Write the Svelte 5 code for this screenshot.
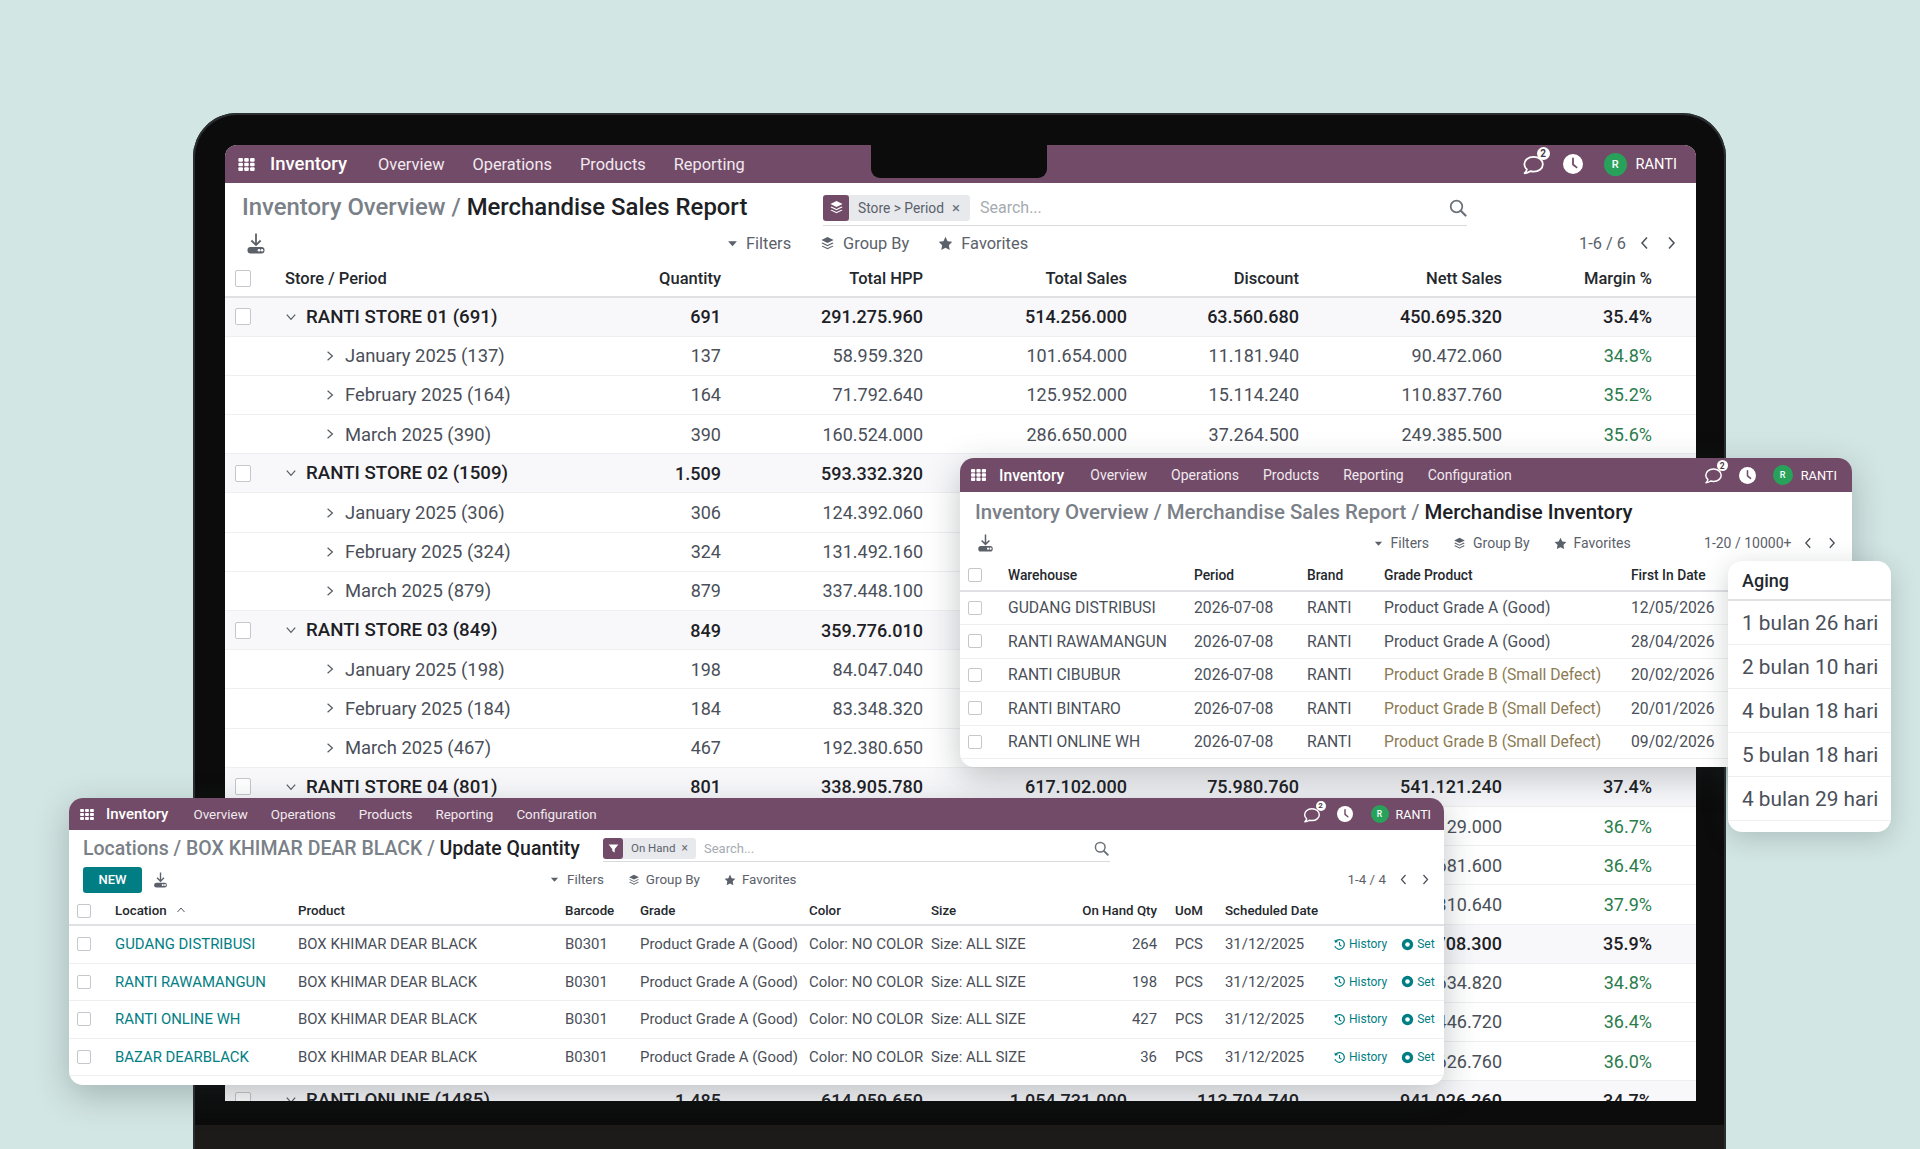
<script>
  const stores = [
    { name: 'RANTI STORE 01 (691)', v: ['691', '291.275.960', '514.256.000', '63.560.680', '450.695.320', '35.4%'], months: [
      ['January 2025 (137)', '137', '58.959.320', '101.654.000', '11.181.940', '90.472.060', '34.8%'],
      ['February 2025 (164)', '164', '71.792.640', '125.952.000', '15.114.240', '110.837.760', '35.2%'],
      ['March 2025 (390)', '390', '160.524.000', '286.650.000', '37.264.500', '249.385.500', '35.6%']
    ] },
    { name: 'RANTI STORE 02 (1509)', v: ['1.509', '593.332.320', '1.052.310.000', '126.277.200', '926.032.800', '35.9%'], months: [
      ['January 2025 (306)', '306', '124.392.060', '221.540.000', '26.584.800', '194.955.200', '36.2%'],
      ['February 2025 (324)', '324', '131.492.160', '235.420.000', '28.250.400', '207.169.600', '36.5%'],
      ['March 2025 (879)', '879', '337.448.100', '595.350.000', '71.442.000', '523.908.000', '35.6%']
    ] },
    { name: 'RANTI STORE 03 (849)', v: ['849', '359.776.010', '640.920.000', '76.910.400', '564.009.600', '36.2%'], months: [
      ['January 2025 (198)', '198', '84.047.040', '149.460.000', '17.935.200', '131.524.800', '36.1%'],
      ['February 2025 (184)', '184', '83.348.320', '145.820.000', '17.498.400', '128.321.600', '35.0%'],
      ['March 2025 (467)', '467', '192.380.650', '345.640.000', '41.476.800', '304.163.200', '36.7%']
    ] },
    { name: 'RANTI STORE 04 (801)', v: ['801', '338.905.780', '617.102.000', '75.980.760', '541.121.240', '37.4%'], months: [
      ['January 2025 (201)', '201', '90.640.120', '162.650.000', '19.521.000', '143.129.000', '36.7%'],
      ['February 2025 (210)', '210', '100.263.900', '179.180.000', '21.498.400', '157.681.600', '36.4%'],
      ['March 2025 (390)', '390', '149.257.400', '272.900.000', '32.589.360', '240.310.640', '37.9%']
    ] },
    { name: 'RANTI STORE 05 (1198)', v: ['1.198', '350.480.500', '621.240.000', '74.531.700', '546.708.300', '35.9%'], months: [
      ['January 2025 (310)', '310', '87.781.300', '153.000.000', '18.365.180', '134.634.820', '34.8%'],
      ['February 2025 (360)', '360', '93.760.500', '167.550.000', '20.103.280', '147.446.720', '36.4%'],
      ['March 2025 (528)', '528', '169.360.760', '300.710.000', '36.083.240', '264.626.760', '36.0%']
    ] },
    { name: 'RANTI ONLINE (1485)', v: ['1.485', '614.059.650', '1.054.731.000', '113.704.740', '941.026.260', '34.7%'], months: [] }
  ];

  const inventory = [
    ['GUDANG DISTRIBUSI', 'Product Grade A (Good)', '12/05/2026', false],
    ['RANTI RAWAMANGUN', 'Product Grade A (Good)', '28/04/2026', false],
    ['RANTI CIBUBUR', 'Product Grade B (Small Defect)', '20/02/2026', true],
    ['RANTI BINTARO', 'Product Grade B (Small Defect)', '20/01/2026', true],
    ['RANTI ONLINE WH', 'Product Grade B (Small Defect)', '09/02/2026', true]
  ];
  const aging = ['1 bulan 26 hari', '2 bulan 10 hari', '4 bulan 18 hari', '5 bulan 18 hari', '4 bulan 29 hari'];
  const quants = [
    ['GUDANG DISTRIBUSI', '264'],
    ['RANTI RAWAMANGUN', '198'],
    ['RANTI ONLINE WH', '427'],
    ['BAZAR DEARBLACK', '36']
  ];
  const baseMenu = ['Overview', 'Operations', 'Products', 'Reporting'];
  const fullMenu = [...baseMenu, 'Configuration'];
</script>

{#snippet apps()}
  <svg class="apps" viewBox="0 0 15 12" aria-hidden="true">
    {#each [0, 1, 2] as r}
      {#each [0, 1, 2] as c}
        <rect x={c * 5.4} y={r * 4.3} width="4.2" height="3.4" rx="0.9" fill="#fff" />
      {/each}
    {/each}
  </svg>
{/snippet}

{#snippet nav(menu)}
  <header class="nav">
    {@render apps()}
    <span class="brand">Inventory</span>
    <nav class="menu">
      {#each menu as item}<span>{item}</span>{/each}
    </nav>
    <div class="systray">
      <span class="chat">
        <svg viewBox="0 0 20 20" aria-hidden="true">
          <path d="M10.5 4C6 4 2.8 6.8 2.8 10.2c0 1.7.8 3.2 2.1 4.3-.2 1.2-.9 2.3-1.9 3.2 1.9-.1 3.5-.8 4.7-1.7.9.3 1.8.4 2.8.4 4.5 0 7.7-2.8 7.7-6.2S15 4 10.5 4z" fill="none" stroke="#fff" stroke-width="1.5" stroke-linejoin="round" />
        </svg>
        <i class="badge">2</i>
      </span>
      <svg class="clock" viewBox="0 0 20 20" aria-hidden="true">
        <circle cx="10" cy="10" r="10" fill="#fff" />
        <path d="M10 4.5V10.5L13.6 13.4" fill="none" stroke="#714b67" stroke-width="1.8" stroke-linecap="round" />
      </svg>
      <span class="avatar">R</span>
      <span class="user">RANTI</span>
    </div>
  </header>
{/snippet}

{#snippet caret()}
  <svg class="ic caret" viewBox="0 0 10 10" aria-hidden="true"><path d="M1 3h8L5 7.6z" fill="currentColor" /></svg>
{/snippet}

{#snippet layers()}
  <svg class="ic" viewBox="0 0 16 16" aria-hidden="true">
    <path d="M8 1l6.5 3.2L8 7.4 1.5 4.2z" fill="currentColor" />
    <path d="M2.8 6.9L8 9.5l5.2-2.6 1.3.7L8 10.8 1.5 7.6z" fill="currentColor" />
    <path d="M2.8 10.3L8 12.9l5.2-2.6 1.3.7L8 14.2 1.5 11z" fill="currentColor" />
  </svg>
{/snippet}

{#snippet star()}
  <svg class="ic" viewBox="0 0 16 16" aria-hidden="true">
    <path d="M8 .8l2.2 4.7 5 .7-3.6 3.6.9 5.1L8 12.5l-4.5 2.4.9-5.1L.8 6.2l5-.7z" fill="currentColor" />
  </svg>
{/snippet}

{#snippet download()}
  <svg class="download" viewBox="0 0 20 22" aria-hidden="true">
    <path d="M10 1v11M5.4 8l4.6 4.6L14.6 8" fill="none" stroke="currentColor" stroke-width="1.8" />
    <rect x="1.5" y="14.5" width="17" height="6.5" rx="3" fill="currentColor" />
    <circle cx="13" cy="17.7" r="1.3" fill="#fff" />
    <circle cx="16" cy="17.7" r="1.3" fill="#fff" />
  </svg>
{/snippet}

{#snippet pager(label)}
  <div class="pager">
    <span>{label}</span>
    <svg class="chev" viewBox="0 0 10 16" aria-hidden="true"><path d="M7.5 2.5L2.5 8l5 5.5" /></svg>
    <svg class="chev" viewBox="0 0 10 16" aria-hidden="true"><path d="M2.5 2.5l5 5.5-5 5.5" /></svg>
  </div>
{/snippet}

{#snippet facets()}
  <div class="facets">
    <span class="facet">{@render caret()}Filters</span>
    <span class="facet">{@render layers()}Group By</span>
    <span class="facet">{@render star()}Favorites</span>
  </div>
{/snippet}

{#snippet search(label, icon)}
  <div class="search">
    <span class="chip">
      <span class="chip-icon">
        {#if icon === 'filter'}
          <svg viewBox="0 0 16 16" aria-hidden="true"><path d="M2 3h12L9.5 8.5V13L6.5 11V8.5z" fill="#fff" /></svg>
        {:else}
          <svg viewBox="0 0 16 16" aria-hidden="true">
            <path d="M8 1l6.5 3.2L8 7.4 1.5 4.2z" fill="#fff" />
            <path d="M2.8 6.9L8 9.5l5.2-2.6 1.3.7L8 10.8 1.5 7.6zM2.8 10.3L8 12.9l5.2-2.6 1.3.7L8 14.2 1.5 11z" fill="#fff" />
          </svg>
        {/if}
      </span>
      <span class="chip-label">{label}</span>
      <span class="chip-x">×</span>
    </span>
    <span class="placeholder">Search...</span>
    <svg class="magnifier" viewBox="0 0 18 18" aria-hidden="true">
      <circle cx="7.5" cy="7.5" r="5.8" fill="none" stroke="currentColor" stroke-width="1.8" />
      <path d="M11.8 11.8L16.5 16.5" stroke="currentColor" stroke-width="2.2" stroke-linecap="round" />
    </svg>
  </div>
{/snippet}

{#snippet checkbox()}<span class="check"></span>{/snippet}

<div class="stage">
  <div class="laptop">
    <div class="screen main">
      {@render nav(baseMenu)}
      <div class="title-row">
        <h1><span class="crumb">Inventory Overview /</span> Merchandise Sales Report</h1>
        {@render search('Store > Period', 'layers')}
      </div>
      <div class="tools">
        {@render download()}
        {@render facets()}
        {@render pager('1-6 / 6')}
      </div>
      <div class="row head">
        <span class="cb">{@render checkbox()}</span>
        <span>Store / Period</span>
        <span class="num">Quantity</span>
        <span class="num">Total HPP</span>
        <span class="num">Total Sales</span>
        <span class="num">Discount</span>
        <span class="num">Nett Sales</span>
        <span class="num">Margin %</span>
      </div>
      {#each stores as store}
        <div class="row group">
          <span class="cb">{@render checkbox()}</span>
          <span class="label">
            <svg class="fold" viewBox="0 0 10 10" aria-hidden="true"><path d="M1.5 3l3.5 4 3.5-4" /></svg>
            {store.name}
          </span>
          {#each store.v as val}<span class="num">{val}</span>{/each}
        </div>
        {#each store.months as m}
          <div class="row month">
            <span class="cb"></span>
            <span class="label">
              <svg class="fold" viewBox="0 0 10 10" aria-hidden="true"><path d="M3 1.5l4 3.5-4 3.5" /></svg>
              {m[0]}
            </span>
            {#each m.slice(1) as val, i}
              <span class="num" class:good={i === 5}>{val}</span>
            {/each}
          </div>
        {/each}
      {/each}
      <div class="notch"></div>
    </div>
    <div class="chin"></div>
  </div>

  <section class="window inv">
    {@render nav(fullMenu)}
    <div class="title-row">
      <h1><span class="crumb">Inventory Overview / Merchandise Sales Report /</span> Merchandise Inventory</h1>
    </div>
    <div class="tools">
      {@render download()}
      {@render facets()}
      {@render pager('1-20 / 10000+')}
    </div>
    <div class="row head">
      <span class="cb">{@render checkbox()}</span>
      <span>Warehouse</span><span>Period</span><span>Brand</span><span>Grade Product</span><span>First In Date</span>
    </div>
    {#each inventory as [wh, grade, date, defect]}
      <div class="row">
        <span class="cb">{@render checkbox()}</span>
        <span>{wh}</span><span>2026-07-08</span><span>RANTI</span>
        <span class:defect>{grade}</span><span>{date}</span>
      </div>
    {/each}
  </section>

  <aside class="aging">
    <div class="aging-head">Aging</div>
    {#each aging as a}<div class="aging-row">{a}</div>{/each}
  </aside>

  <section class="window quant">
    {@render nav(fullMenu)}
    <div class="title-row">
      <h1><span class="crumb">Locations / BOX KHIMAR DEAR BLACK /</span> Update Quantity</h1>
      {@render search('On Hand', 'filter')}
    </div>
    <div class="tools">
      <button class="new">NEW</button>
      {@render download()}
      {@render facets()}
      {@render pager('1-4 / 4')}
    </div>
    <div class="row head">
      <span class="cb">{@render checkbox()}</span>
      <span>Location <svg class="sort" viewBox="0 0 10 10" aria-hidden="true"><path d="M1.5 7l3.5-4 3.5 4" /></svg></span>
      <span>Product</span><span>Barcode</span><span>Grade</span><span>Color</span><span>Size</span>
      <span class="num">On Hand Qty</span><span class="uom">UoM</span><span>Scheduled Date</span><span></span>
    </div>
    {#each quants as [loc, qty]}
      <div class="row">
        <span class="cb">{@render checkbox()}</span>
        <span class="link">{loc}</span>
        <span>BOX KHIMAR DEAR BLACK</span><span>B0301</span><span>Product Grade A (Good)</span>
        <span>Color: NO COLOR</span><span>Size: ALL SIZE</span>
        <span class="num">{qty}</span><span class="uom">PCS</span><span>31/12/2025</span>
        <span class="actions">
          <span class="act">
            <svg viewBox="0 0 16 16" aria-hidden="true">
              <path d="M3.2 4.2A6 6 0 1 1 2.3 10" fill="none" stroke="currentColor" stroke-width="1.5" />
              <path d="M1.8 1.8l.6 4 3.9-.9z" fill="currentColor" />
              <path d="M8 4.8V8.5l2.4 1.6" fill="none" stroke="currentColor" stroke-width="1.4" />
            </svg>
            History
          </span>
          <span class="act">
            <svg viewBox="0 0 16 16" aria-hidden="true">
              <circle cx="8" cy="8" r="7" fill="currentColor" />
              <circle cx="8" cy="8" r="2.8" fill="#fff" />
            </svg>
            Set
          </span>
        </span>
      </div>
    {/each}
  </section>
</div>

<style>
  :global(body) {
    background: #d2e6e3;
  }
  .stage {
    position: relative;
    width: 1920px;
    height: 1149px;
    overflow: hidden;
    padding: 113px 0 0 193px;
    box-sizing: border-box;
    background: #d2e6e3;
    font-family: Roboto, 'Liberation Sans', sans-serif;
    color: #4a4f59;
  }

  /* laptop */
  .laptop {
    width: 1533px;
    height: 1036px;
    box-sizing: border-box;
    padding: 32px 30px 0 32px;
    background: #0c0c0c;
    border-radius: 44px 44px 0 0;
    box-shadow: inset 0 0 0 2px #2b2e31;
    position: relative;
  }
  .chin {
    position: absolute;
    left: 2px;
    right: 2px;
    top: 1012px;
    height: 24px;
    background: #1d1a1a;
  }
  .screen {
    position: relative;
    height: 956px;
    overflow: hidden;
    background: #fff;
    border-radius: 12px 12px 0 0;
  }
  .notch {
    position: absolute;
    left: 646px;
    top: 0;
    width: 176px;
    height: 33px;
    background: #0c0c0c;
    border-radius: 0 0 9px 9px;
  }

  /* shared chrome */
  .nav {
    display: flex;
    align-items: center;
    background: #714b67;
    color: #fff;
  }
  .apps {
    flex: none;
  }
  .brand {
    font-weight: 500;
  }
  .menu {
    display: flex;
    color: #f1e9ef;
  }
  .systray {
    margin-left: auto;
    display: flex;
    align-items: center;
  }
  .chat {
    position: relative;
    display: block;
  }
  .chat svg {
    display: block;
    width: 100%;
    height: 100%;
  }
  .badge {
    position: absolute;
    display: flex;
    align-items: center;
    justify-content: center;
    border-radius: 50%;
    background: #fff;
    color: #4a3a47;
    font-style: normal;
    font-weight: 700;
  }
  .avatar {
    display: flex;
    align-items: center;
    justify-content: center;
    border-radius: 50%;
    background: #28a25a;
    color: #fff;
    font-weight: 500;
  }
  h1 {
    margin: 0;
    font-weight: 500;
    color: #1d2125;
    white-space: nowrap;
  }
  .crumb {
    color: #7a8087;
  }
  .title-row {
    display: flex;
    align-items: center;
    box-sizing: border-box;
  }
  .search {
    display: flex;
    align-items: center;
    border-bottom: 1px solid #d8dadd;
    box-sizing: border-box;
  }
  .chip {
    display: flex;
    align-items: center;
    background: #e7e9ed;
    border-radius: 3px;
    color: #5b616a;
  }
  .chip-icon {
    display: flex;
    align-items: center;
    justify-content: center;
    align-self: stretch;
    background: #714b67;
    border-radius: 3px;
  }
  .chip-x {
    color: #6c7279;
  }
  .placeholder {
    color: #a6abb1;
  }
  .magnifier {
    margin-left: auto;
    color: #6c7279;
  }
  .tools {
    display: flex;
    align-items: center;
    box-sizing: border-box;
  }
  .download {
    color: #5c6169;
    flex: none;
  }
  .facets {
    display: flex;
    align-items: center;
    color: #5b616a;
  }
  .facet {
    display: flex;
    align-items: center;
  }
  .ic {
    flex: none;
    color: #5b616a;
  }
  .pager {
    display: flex;
    align-items: center;
    margin-left: auto;
    color: #5b616a;
  }
  .chev {
    fill: none;
    stroke: #4a4f59;
    stroke-width: 1.5;
  }
  .row {
    display: grid;
    align-items: center;
    border-bottom: 1px solid #efeff2;
    white-space: nowrap;
    box-sizing: border-box;
  }
  .row.head {
    color: #24282d;
    font-weight: 500;
    border-bottom: 2px solid #dfe1e4;
  }
  .num {
    text-align: right;
  }
  .cb {
    display: flex;
    justify-content: flex-start;
  }
  .check {
    box-sizing: border-box;
    display: block;
    background: #fff;
    border: 1px solid #c4c7cc;
    border-radius: 2px;
  }
  .window {
    position: absolute;
    background: #fff;
    overflow: hidden;
    box-shadow: 0 10px 34px rgba(40, 50, 55, 0.28);
  }

  /* main report */
  .main .nav {
    height: 38px;
    padding: 0 19px 0 13px;
    font-size: 16.4px;
  }
  .main .apps {
    width: 17px;
    height: 13px;
  }
  .main .brand {
    margin-left: 15px;
    font-size: 18.5px;
  }
  .main .menu {
    margin-left: 31px;
    gap: 28px;
  }
  .main .chat {
    width: 24px;
    height: 24px;
  }
  .main .badge {
    top: -5px;
    right: -5px;
    width: 13px;
    height: 13px;
    font-size: 10px;
  }
  .main .clock {
    width: 20px;
    height: 20px;
    margin-left: 18px;
  }
  .main .avatar {
    width: 23px;
    height: 23px;
    margin-left: 21px;
    font-size: 11px;
  }
  .main .user {
    margin-left: 9px;
    font-size: 14.6px;
  }
  .main .title-row {
    height: 48px;
    padding-left: 17px;
  }
  .main h1 {
    font-size: 23.9px;
    width: 581px;
  }
  .main .search {
    width: 644px;
    height: 36px;
    margin-top: 2px;
  }
  .main .chip {
    height: 26px;
    width: 147px;
    font-size: 13.8px;
  }
  .main .chip-icon {
    width: 26px;
  }
  .main .chip-icon svg {
    width: 15px;
    height: 15px;
  }
  .main .chip-label {
    margin-left: 9px;
  }
  .main .chip-x {
    margin-left: 8px;
    font-size: 15px;
  }
  .main .placeholder {
    margin-left: 10px;
    font-size: 16px;
  }
  .main .magnifier {
    width: 18px;
    height: 18px;
  }
  .main .tools {
    height: 31px;
    padding: 0 19px 7px 0;
    font-size: 16.4px;
  }
  .main .download {
    width: 20px;
    height: 23px;
    margin-left: 21px;
  }
  .main .facets {
    margin-left: 461px;
    gap: 29px;
  }
  .main .facet {
    gap: 8px;
  }
  .main .ic {
    width: 15px;
    height: 15px;
  }
  .main .caret {
    width: 11px;
    height: 11px;
  }
  .main .pager .chev {
    width: 11px;
    height: 16px;
    margin-left: 16px;
  }
  .main .pager .chev:first-of-type {
    margin-left: 13px;
  }
  .main .row {
    grid-template-columns: 60px 336px 100px 202px 204px 172px 203px 150px;
    height: 39.2px;
    font-size: 18px;
  }
  .main .row.head {
    height: 35.5px;
    font-size: 16.5px;
  }
  .main .cb {
    padding-left: 10px;
  }
  .main .check {
    width: 16px;
    height: 17px;
  }
  .main .group {
    background: #f8f8fb;
    color: #1d2125;
    font-weight: 500;
  }
  .main .label {
    display: flex;
    align-items: center;
    gap: 9px;
    font-size: 18.4px;
  }
  .main .group .label {
    font-size: 18.7px;
  }
  .fold {
    width: 12px;
    height: 12px;
    fill: none;
    stroke: #555b63;
    stroke-width: 1;
    flex: none;
  }
  .main .month .label {
    padding-left: 39px;
  }
  .good {
    color: #2a7c4c;
  }

  /* merchandise inventory */
  .inv {
    left: 960px;
    top: 458px;
    width: 892px;
    height: 309px;
    border-radius: 14px 14px 0 14px;
  }
  .inv .nav {
    height: 34px;
    padding: 0 15px 0 11px;
    font-size: 14px;
  }
  .inv .apps {
    width: 15px;
    height: 12px;
  }
  .inv .brand {
    margin-left: 13px;
    font-size: 15.7px;
  }
  .inv .menu {
    margin-left: 26px;
    gap: 24px;
  }
  .inv .chat {
    width: 20px;
    height: 20px;
  }
  .inv .badge {
    top: -5px;
    right: -5px;
    width: 11px;
    height: 11px;
    font-size: 8.5px;
  }
  .inv .clock {
    width: 17px;
    height: 17px;
    margin-left: 16px;
  }
  .inv .avatar {
    width: 20px;
    height: 20px;
    margin-left: 17px;
    font-size: 9px;
  }
  .inv .user {
    margin-left: 8px;
    font-size: 12.8px;
  }
  .inv .title-row {
    height: 39px;
    padding-left: 15px;
  }
  .inv h1 {
    font-size: 20.4px;
  }
  .inv .tools {
    height: 28.5px;
    padding: 0 15px 4.5px 0;
    font-size: 14px;
  }
  .inv .download {
    width: 17px;
    height: 20px;
    margin-left: 17px;
  }
  .inv .facets {
    margin-left: 379.5px;
    gap: 24px;
  }
  .inv .facet {
    gap: 7px;
  }
  .inv .ic {
    width: 13px;
    height: 13px;
  }
  .inv .caret {
    width: 9px;
    height: 9px;
    margin-right: 1px;
  }
  .inv .pager .chev {
    width: 10px;
    height: 14px;
    margin-left: 14px;
  }
  .inv .pager .chev:first-of-type {
    margin-left: 11.5px;
  }
  .inv .row {
    grid-template-columns: 48px 186px 113px 77px 247px auto;
    height: 33.5px;
    font-size: 15.7px;
  }
  .inv .row.head {
    height: 32px;
    font-size: 13.8px;
  }
  .inv .check {
    width: 14px;
    height: 14px;
  }
  .inv .cb {
    padding-left: 8px;
  }
  .defect {
    color: #8b7a52;
  }

  /* aging */
  .aging {
    position: absolute;
    left: 1728px;
    top: 561px;
    width: 163px;
    height: 271px;
    background: #fff;
    border-radius: 14px;
    box-shadow: 0 6px 26px rgba(40, 50, 55, 0.22);
    overflow: hidden;
  }
  .aging-head {
    height: 40px;
    line-height: 40px;
    padding-left: 14px;
    box-sizing: border-box;
    font-size: 18px;
    font-weight: 500;
    color: #24282d;
    border-bottom: 2px solid #dfe1e4;
  }
  .aging-row {
    height: 44px;
    line-height: 44px;
    padding-left: 14px;
    font-size: 20.8px;
    box-sizing: border-box;
    border-bottom: 1px solid #efeff2;
  }

  /* update quantity */
  .quant {
    left: 69px;
    top: 798px;
    width: 1375px;
    height: 287px;
    border-radius: 14px;
  }
  .quant .nav {
    height: 32px;
    padding: 0 13px 0 11px;
    font-size: 13.4px;
  }
  .quant .apps {
    width: 14px;
    height: 11px;
  }
  .quant .brand {
    margin-left: 12px;
    font-size: 15px;
  }
  .quant .menu {
    margin-left: 25px;
    gap: 23px;
  }
  .quant .chat {
    width: 19px;
    height: 19px;
  }
  .quant .badge {
    top: -4px;
    right: -5px;
    width: 10px;
    height: 10px;
    font-size: 8px;
  }
  .quant .clock {
    width: 16px;
    height: 16px;
    margin-left: 16px;
  }
  .quant .avatar {
    width: 18px;
    height: 18px;
    margin-left: 18px;
    font-size: 8.5px;
  }
  .quant .user {
    margin-left: 7px;
    font-size: 12.5px;
  }
  .quant .title-row {
    height: 35px;
    padding-left: 14px;
    padding-top: 2px;
  }
  .quant h1 {
    font-size: 19.5px;
    width: 520px;
  }
  .quant .search {
    width: 507px;
    height: 26px;
  }
  .quant .chip {
    height: 21px;
    width: 93px;
    font-size: 11.5px;
  }
  .quant .chip-icon {
    width: 20px;
  }
  .quant .chip-icon svg {
    width: 13px;
    height: 13px;
  }
  .quant .chip-label {
    margin-left: 8px;
  }
  .quant .chip-x {
    margin-left: 6px;
    font-size: 12px;
  }
  .quant .placeholder {
    margin-left: 8px;
    font-size: 13px;
  }
  .quant .magnifier {
    width: 15px;
    height: 15px;
    margin-right: 1px;
  }
  .quant .tools {
    height: 29px;
    padding-right: 14px;
    font-size: 13.4px;
  }
  .new {
    margin-left: 14px;
    width: 59px;
    height: 26px;
    border: 0;
    border-radius: 3px;
    background: #017e84;
    color: #fff;
    font: 500 13px Roboto, sans-serif;
  }
  .quant .download {
    width: 15px;
    height: 18px;
    margin-left: 11px;
  }
  .quant .facets {
    margin-left: 382px;
    gap: 24px;
  }
  .quant .facet {
    gap: 6px;
  }
  .quant .ic {
    width: 12px;
    height: 12px;
  }
  .quant .caret {
    width: 9px;
    height: 9px;
    margin-right: 2px;
  }
  .quant .pager .chev {
    width: 9px;
    height: 13px;
    margin-left: 13px;
  }
  .quant .row {
    grid-template-columns: 46px 183px 267px 75px 169px 122px 129px 97px 68px 108px auto;
    height: 37.6px;
    font-size: 14.9px;
  }
  .quant .row.head {
    height: 29px;
    margin-top: 3px;
    font-size: 13.3px;
  }
  .quant .check {
    width: 14px;
    height: 14px;
  }
  .quant .cb {
    padding-left: 8px;
  }
  .uom {
    padding-left: 18px;
  }
  .sort {
    width: 10px;
    height: 10px;
    margin-left: 6px;
    fill: none;
    stroke: #555b63;
    stroke-width: 1;
  }
  .link {
    color: #017e84;
  }
  .actions {
    display: flex;
    gap: 14px;
    color: #017e84;
    font-size: 12px;
  }
  .act {
    display: flex;
    align-items: center;
    gap: 3px;
  }
  .act svg {
    width: 13px;
    height: 13px;
  }
</style>
